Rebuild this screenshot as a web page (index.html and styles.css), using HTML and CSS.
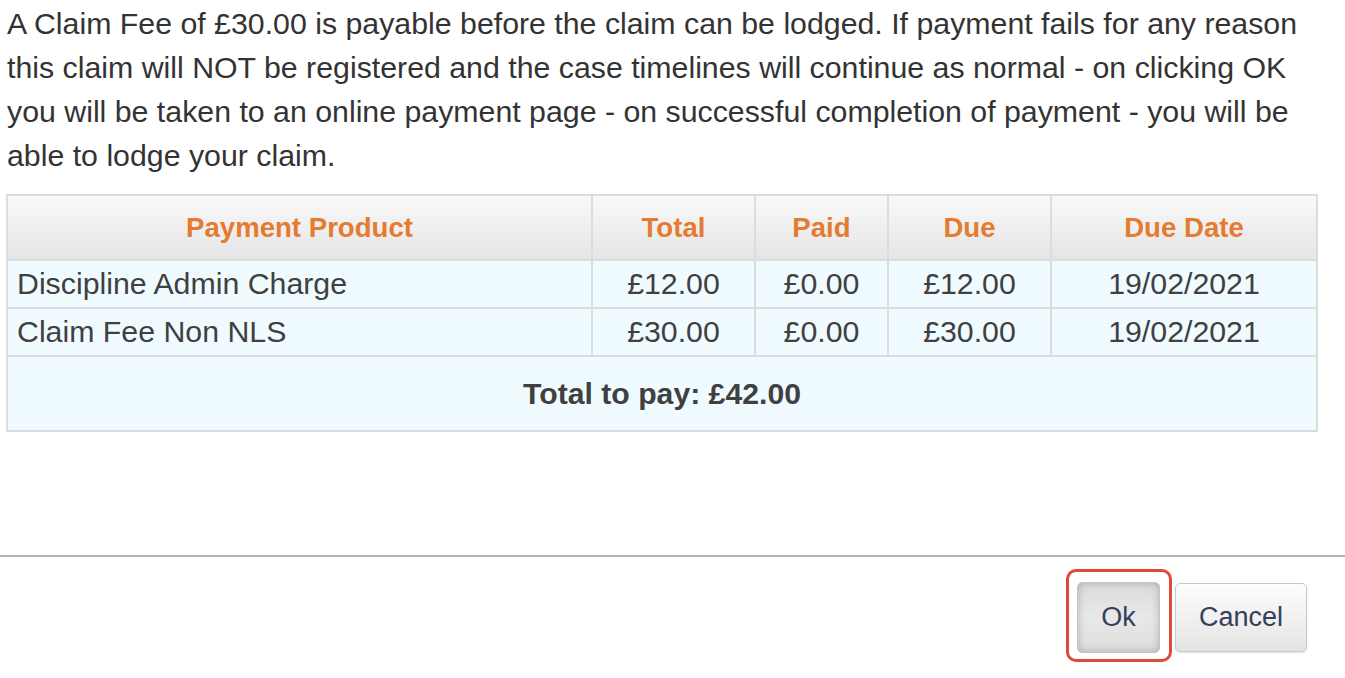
FILE: index.html
```html
<!DOCTYPE html>
<html lang="en">
<head>
<meta charset="utf-8">
<title>Claim Fee</title>
<link rel="stylesheet" href="styles.css">
</head>
<body>
<div class="dialog">
  <div class="dialog-body">
    <p class="intro">A Claim Fee of £30.00 is payable before the claim can be lodged. If payment fails for any reason this claim will NOT be registered and the case timelines will continue as normal - on clicking OK you will be taken to an online payment page - on successful completion of payment - you will be able to lodge your claim.</p>
    <table class="pay-table">
      <colgroup>
        <col class="c-product">
        <col class="c-total">
        <col class="c-paid">
        <col class="c-due">
        <col class="c-date">
      </colgroup>
      <thead>
        <tr>
          <th>Payment Product</th>
          <th>Total</th>
          <th>Paid</th>
          <th>Due</th>
          <th>Due Date</th>
        </tr>
      </thead>
      <tbody>
        <tr>
          <td class="name">Discipline Admin Charge</td>
          <td>£12.00</td>
          <td>£0.00</td>
          <td>£12.00</td>
          <td>19/02/2021</td>
        </tr>
        <tr>
          <td class="name">Claim Fee Non NLS</td>
          <td>£30.00</td>
          <td>£0.00</td>
          <td>£30.00</td>
          <td>19/02/2021</td>
        </tr>
        <tr class="total-row">
          <td colspan="5">Total to pay: £42.00</td>
        </tr>
      </tbody>
    </table>
  </div>
  <div class="dialog-footer">
    <button class="btn btn-ok" type="button">Ok</button>
    <button class="btn btn-cancel" type="button">Cancel</button>
  </div>
</div>
</body>
</html>
```
FILE: styles.css
```css
html, body {
  margin: 0;
  padding: 0;
  background: #ffffff;
}

body {
  font-family: "Liberation Sans", Arial, sans-serif;
  color: #333333;
}

.dialog {
  width: 1345px;
  height: 678px;
  display: flex;
  flex-direction: column;
}

.dialog-body {
  height: 555px;
  box-sizing: border-box;
  padding: 2px 0 0 7px;
}

.intro {
  margin: 0;
  font-size: 30.3px;
  line-height: 44px;
  width: 1320px;
  color: #333333;
}

.pay-table {
  margin-top: 16px;
  margin-left: -1px;
  width: 1310px;
  border-collapse: collapse;
  border: 2px solid #dddddd;
  table-layout: fixed;
}

.c-product { width: 585px; }
.c-total { width: 163px; }
.c-paid { width: 133px; }
.c-due { width: 163px; }
.c-date { width: 266px; }

.pay-table th {
  height: 63px;
  padding: 0;
  font-size: 27.6px;
  font-weight: bold;
  color: #e57b30;
  text-align: center;
  background: linear-gradient(#f9f9f9, #e5e5e7);
  border: 2px solid #dcdcdc;
}

.pay-table td {
  height: 46px;
  padding: 0;
  font-size: 30.3px;
  text-align: center;
  color: #404040;
  background: #f0fbff;
  border: 2px solid #dcdcdc;
}

.pay-table td.name {
  text-align: left;
  padding-left: 9px;
}

.pay-table .total-row td {
  height: 73px;
  font-size: 30.2px;
  font-weight: bold;
  color: #404040;
}

.dialog-footer {
  flex: 1;
  border-top: 2px solid #b3b3b3;
  display: flex;
  align-items: center;
  justify-content: flex-end;
  gap: 15px;
  padding-right: 38px;
}

.btn {
  font-family: "Liberation Sans", Arial, sans-serif;
  font-size: 27px;
  color: #34405a;
  border-radius: 5px;
  padding: 0;
  cursor: pointer;
}

.btn-ok {
  position: relative;
  width: 83px;
  height: 71px;
  border: 1px solid #c4c4c4;
  background: linear-gradient(#dcdcdc, #e8e8e8 50%, #dedede);
  box-shadow: inset 0 0 8px rgba(0, 0, 0, 0.22);
}

.btn-ok::after {
  content: "";
  position: absolute;
  left: -12px;
  right: -13px;
  top: -14px;
  bottom: -10px;
  border: 3px solid #e04a3b;
  border-radius: 10px;
}

.btn-cancel {
  width: 132px;
  height: 69px;
  border: 1px solid #c8c8c8;
  background: linear-gradient(#fdfdfd, #e4e4e4);
  box-shadow: 0 1px 2px rgba(0, 0, 0, 0.12);
}
```
